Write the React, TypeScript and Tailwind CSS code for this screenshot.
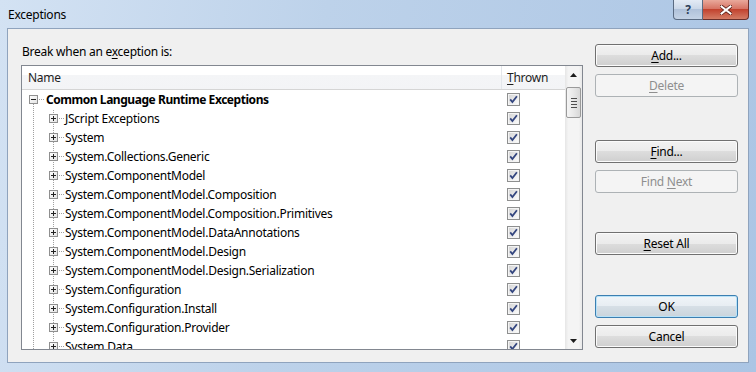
import type { ReactNode } from 'react'

const children = [
  'JScript Exceptions',
  'System',
  'System.Collections.Generic',
  'System.ComponentModel',
  'System.ComponentModel.Composition',
  'System.ComponentModel.Composition.Primitives',
  'System.ComponentModel.DataAnnotations',
  'System.ComponentModel.Design',
  'System.ComponentModel.Design.Serialization',
  'System.Configuration',
  'System.Configuration.Install',
  'System.Configuration.Provider',
  'System.Data',
]

const ROW_H = 19
const LIST_TOP = 90

// dotted connector pixels, kept on the same absolute parity like the real tree view
function vdots(x: number, from: number, to: number, top: number) {
  const out: ReactNode[] = []
  for (let y = from; y < to; y++) {
    if ((top + y) % 2 === 0) out.push(<rect key={`v${x}-${y}`} x={x} y={y} width={1} height={1} fill="#a0a0a0" />)
  }
  return out
}

function hdots(y: number, from: number, to: number) {
  const out: ReactNode[] = []
  for (let x = from; x < to; x++) {
    if (x % 2 === 1) out.push(<rect key={`h${x}`} x={x} y={y} width={1} height={1} fill="#a0a0a0" />)
  }
  return out
}

function ExpandBox({ x, open }: { x: number; open?: boolean }) {
  return (
    <g>
      <rect x={x + 0.5} y={5.5} width={8} height={8} fill="url(#boxfill)" stroke="#8f8f8f" />
      <rect x={x + 2} y={9} width={5} height={1} fill="#222" />
      {!open && <rect x={x + 4} y={7} width={1} height={5} fill="#222" />}
    </g>
  )
}

function TreeGlyph({ depth, index }: { depth: 0 | 1; index: number }) {
  const top = LIST_TOP + index * ROW_H
  const w = depth === 0 ? 24 : 43
  return (
    <svg width={w} height={ROW_H} className="shrink-0">
      <defs>
        <linearGradient id="boxfill" x1="0" y1="0" x2="1" y2="1">
          <stop offset="0" stopColor="#ffffff" />
          <stop offset="1" stopColor="#e2e2e2" />
        </linearGradient>
      </defs>
      {depth === 0 ? (
        <>
          {vdots(11, 14, ROW_H, top)}
          {hdots(9, 16, 22)}
          <ExpandBox x={7} open />
        </>
      ) : (
        <>
          {vdots(11, 0, ROW_H, top)}
          {vdots(31, 0, ROW_H, top)}
          {hdots(9, 36, 42)}
          <ExpandBox x={27} />
        </>
      )}
    </svg>
  )
}

function CheckBox() {
  return (
    <svg width={13} height={13} className="shrink-0">
      <defs>
        <linearGradient id="cbfill" x1="0" y1="0" x2="1" y2="1">
          <stop offset="0" stopColor="#d6d6d6" />
          <stop offset="1" stopColor="#fbfbfb" />
        </linearGradient>
      </defs>
      <rect x={0.5} y={0.5} width={12} height={12} fill="#f4f4f4" stroke="#8e8f8f" />
      <rect x={2} y={2} width={9} height={9} fill="url(#cbfill)" />
      <path d="M3.2 6.4 L5.4 9 L9.9 3.2" fill="none" stroke="#34467f" strokeWidth={1.8} />
    </svg>
  )
}

function Row({ depth, index, label }: { depth: 0 | 1; index: number; label: string }) {
  return (
    <div className="flex h-[19px] items-center">
      <div className="flex w-[481px] items-center overflow-hidden">
        <TreeGlyph depth={depth} index={index} />
        <span className={depth === 0 ? 'whitespace-nowrap font-bold tracking-[-0.45px]' : 'whitespace-nowrap'}>
          {label}
        </span>
      </div>
      <div className="flex pl-[4px]">
        <CheckBox />
      </div>
    </div>
  )
}

function Arrow({ down }: { down?: boolean }) {
  return (
    <svg width={7} height={4}>
      <path d={down ? 'M0 0 H7 L3.5 4 Z' : 'M0 4 H7 L3.5 0 Z'} fill="#1c1c1c" />
    </svg>
  )
}

function ScrollBar() {
  return (
    <div className="flex w-[17px] flex-col bg-[linear-gradient(90deg,#e6e6e6,#f4f4f4_20%,#f4f4f4_80%,#e9e9e9)]">
      <div className="flex h-[17px] items-center justify-center">
        <Arrow />
      </div>
      <div className="flex-1">
        <div className="mx-[1px] mt-[4px] flex h-[31px] flex-col items-center justify-center gap-[2px] rounded-[2px] border border-[#9a9a9a] bg-[linear-gradient(90deg,#f5f5f5,#e8e8e8_50%,#d8d8d8)]">
          <div className="h-px w-[6px] bg-[#4d4d4d]" />
          <div className="h-px w-[6px] bg-[#4d4d4d]" />
          <div className="h-px w-[6px] bg-[#4d4d4d]" />
          <div className="h-px w-[6px] bg-[#4d4d4d]" />
        </div>
      </div>
      <div className="flex h-[17px] items-center justify-center">
        <Arrow down />
      </div>
    </div>
  )
}

function Key({ children }: { children: ReactNode }) {
  return <span className="underline decoration-1 underline-offset-2">{children}</span>
}

function Btn({
  children,
  disabled,
  primary,
  className = '',
}: {
  children: ReactNode
  disabled?: boolean
  primary?: boolean
  className?: string
}) {
  const look = disabled
    ? 'border-[#adb2b5] bg-[#f4f4f4] text-[#8f8f8f]'
    : primary
      ? 'border-[#3c7fb1] bg-[linear-gradient(#f0f5f9,#e7edf2_50%,#d6dfe6_50%,#cad4dc)] shadow-[inset_0_0_0_1px_#b8e2f8] text-black'
      : 'border-[#707070] bg-[linear-gradient(#f2f2f2,#ebebeb_50%,#dddddd_50%,#cfcfcf)] shadow-[inset_0_0_0_1px_#fbfbfb] text-black'
  return (
    <div className={`flex h-[23px] items-center justify-center rounded-[3px] border ${look} ${className}`}>
      <span className="whitespace-pre">{children}</span>
    </div>
  )
}

export default function App() {
  return (
    <div className="flex h-[372px] w-[756px] flex-col overflow-hidden bg-[linear-gradient(100deg,#d3e2f3,#bdd2ea_40%,#abc5e4)] font-['Noto_Sans',sans-serif] text-[12px] leading-[16px] tracking-[-0.25px] text-black">
      {/* title bar */}
      <div className="flex h-[28px] shrink-0 items-start justify-between">
        <div className="pl-[8px] pt-[7px] text-black">Exceptions</div>
        <div className="mr-[7px] flex">
          <div className="flex h-[20px] w-[30px] items-center justify-center rounded-bl-[4px] border border-t-0 border-[#5a6b82] bg-[linear-gradient(#e3ebf5,#c9d6e7_50%,#b0c2da_50%,#c4d3e6)] text-[12px] font-bold leading-none text-[#2c3e58]">
            ?
          </div>
          <div className="flex h-[20px] w-[46px] items-center justify-center rounded-br-[4px] border border-l-0 border-t-0 border-[#6b2f2a] bg-[linear-gradient(#e9a99b,#d56f5f_50%,#c2432f_50%,#d47c65)]">
            <svg width={12} height={10}>
              <path d="M1.5 1.5 L10.5 8.5 M10.5 1.5 L1.5 8.5" stroke="#5a2119" strokeWidth={3.6} strokeLinecap="square" />
              <path d="M1.5 1.5 L10.5 8.5 M10.5 1.5 L1.5 8.5" stroke="#ffffff" strokeWidth={2} strokeLinecap="square" />
            </svg>
          </div>
        </div>
      </div>

      {/* client area */}
      <div className="mx-[7px] flex h-[335px] shrink-0 border border-[#8fa3bd] bg-[#f0f0f0] pl-[13px] pr-[10px] pt-[15px]">
        <div className="flex w-[562px] flex-col">
          <div className="h-[16px] pl-[1px]">
            Break when an e<Key>x</Key>ception is:
          </div>
          <div className="mt-[5px] flex h-[285px] border border-[#828790] bg-white">
            <div className="flex flex-1 flex-col overflow-hidden">
              <div className="flex h-[24px] shrink-0 border-b border-[#d5d5d5] bg-[linear-gradient(#ffffff,#ffffff_40%,#f4f5f7_40%,#f3f4f6)] text-[#1e1e1e]">
                <div className="flex w-[480px] items-center border-r border-[#e3e6ea] pl-[6px]">Name</div>
                <div className="flex items-center pl-[5px]">
                  <span>
                    <Key>T</Key>hrown
                  </span>
                </div>
              </div>
              <Row depth={0} index={0} label="Common Language Runtime Exceptions" />
              {children.map((c, i) => (
                <Row key={c} depth={1} index={i + 1} label={c} />
              ))}
            </div>
            <ScrollBar />
          </div>
        </div>

        <div className="ml-[12px] flex w-[143px] flex-col">
          <Btn>
            <Key>A</Key>dd...
          </Btn>
          <Btn disabled className="mt-[7px]">
            <Key>D</Key>elete
          </Btn>
          <Btn className="mt-[43px]">
            <Key>F</Key>ind...
          </Btn>
          <Btn disabled className="mt-[7px]">
            Find <Key>N</Key>ext
          </Btn>
          <Btn className="mt-[39px]">
            <Key>R</Key>eset All
          </Btn>
          <Btn primary className="mt-[40px]">
            OK
          </Btn>
          <Btn className="mt-[7px]">Cancel</Btn>
        </div>
      </div>
    </div>
  )
}
